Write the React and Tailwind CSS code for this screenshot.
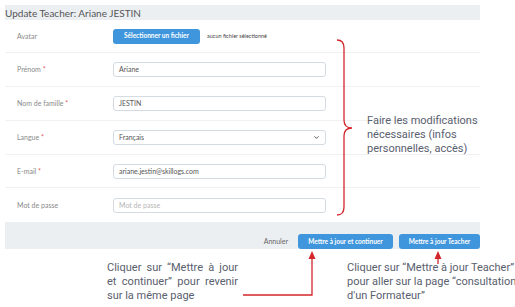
import React from 'react';
import { ChevronDown } from 'lucide-react';

const ui = { fontFamily: 'Lato, "Open Sans", sans-serif' };
const note = { fontFamily: 'Roboto, "Open Sans", sans-serif' };

const Label = ({ children, required }) => (
  <div className="w-[108px] shrink-0 pl-[12px] text-[7px] text-[#8a8a8a]">
    {children}
    {required && <span className="text-[#e25555]"> *</span>}
  </div>
);

const Field = ({ value, placeholder }) => (
  <div className="w-[213px] h-[15px] rounded-[3px] border border-[#d5dbe3] bg-white flex items-center px-[5px] text-[7px]">
    {value ? <span className="text-[#555]">{value}</span> : <span className="text-[#b5b5b5]">{placeholder}</span>}
  </div>
);

const Row = ({ h, label, required, children, last }) => (
  <div className={`${h} flex items-center ${last ? '' : 'border-b border-[#f1f1f1]'}`}>
    <Label required={required}>{label}</Label>
    {children}
  </div>
);

export default function App() {
  return (
    <div className="relative w-[515px] h-[307px] bg-white overflow-hidden" style={ui}>
      <div className="pt-[5px] pl-[5px] w-[480px]">
        {/* header */}
        <div className="h-[15px] bg-[#eceff2] flex items-center text-[10px] leading-none text-[#555]">
          Update Teacher: Ariane JESTIN
        </div>

        {/* form */}
        <div className="bg-white">
          <Row h="h-[33px]" label="Avatar">
            <div className="flex items-center gap-[7px]">
              <button className="w-[87px] h-[15px] rounded-[3px] bg-[#3f96dc] text-white text-[6.5px] font-bold">
                Sélectionner un fichier
              </button>
              <span className="text-[5.5px] text-[#444]">aucun fichier sélectionné</span>
            </div>
          </Row>
          <Row h="h-[34px]" label="Prénom" required>
            <Field value="Ariane" />
          </Row>
          <Row h="h-[34px]" label="Nom de famille" required>
            <Field value="JESTIN" />
          </Row>
          <Row h="h-[34px]" label="Langue" required>
            <div className="w-[213px] h-[15px] rounded-[3px] border border-[#d5dbe3] flex items-center justify-between px-[5px] text-[7px] text-[#555]">
              <span>Français</span>
              <ChevronDown size={7} strokeWidth={3} className="text-[#444]" />
            </div>
          </Row>
          <Row h="h-[33px]" label="E-mail" required>
            <Field value="ariane.jestin@skillogs.com" />
          </Row>
          <Row h="h-[34px]" label="Mot de passe" last>
            <Field placeholder="Mot de passe" />
          </Row>
        </div>

        {/* footer */}
        <div className="h-[27px] bg-[#eceff2] flex items-end justify-end gap-[6px]">
          <span className="self-center mt-[12px] mr-[4px] text-[7px] text-[#666]">Annuler</span>
          <button className="w-[95px] h-[15px] rounded-[3px] bg-[#3f96dc] text-white text-[6.5px] font-bold">
            Mettre à jour et continuer
          </button>
          <button className="w-[81px] h-[15px] rounded-[3px] bg-[#3f96dc] text-white text-[6.5px] font-bold">
            Mettre à jour Teacher
          </button>
        </div>

        {/* notes under the screen */}
        <div className="flex mt-[12px] text-[11px] leading-[14px] text-[#59606e]" style={note}>
          <div className="ml-[102px] w-[131px] shrink-0 whitespace-nowrap">
            <div className="[text-align-last:justify]">Cliquer sur “Mettre à jour</div>
            <div className="[text-align-last:justify]">et continuer” pour revenir</div>
            <div>sur la même page</div>
          </div>
          <div className="ml-[109px] shrink-0 whitespace-nowrap">
            Cliquer sur “Mettre à jour Teacher”
            <br />
            pour aller sur la page “consultation
            <br />
            d'un Formateur”
          </div>
        </div>
      </div>

      {/* brace note */}
      <div className="absolute left-[367px] top-[114px] text-[11px] leading-[14px] text-[#59606e]" style={note}>
        Faire les modifications
        <br />
        nécessaires (infos
        <br />
        personnelles, accès)
      </div>

      <svg className="absolute inset-0 pointer-events-none" width="515" height="307">
        <path
          d="M337 40 Q344 40 344 48 L344 120 Q344 128 352 128 Q344 128 344 136 L344 207 Q344 215 337 215"
          fill="none"
          stroke="#d3262b"
          strokeWidth="1.3"
        />
        <polyline points="243,295 312,295 312,258" fill="none" stroke="#d3262b" strokeWidth="1.3" />
        <polygon points="308.5,259 312,251 315.5,259" fill="#d3262b" />
        <line x1="438" y1="264" x2="438" y2="258" stroke="#d3262b" strokeWidth="1.3" />
        <polygon points="434.5,259 438,251 441.5,259" fill="#d3262b" />
      </svg>
    </div>
  );
}
